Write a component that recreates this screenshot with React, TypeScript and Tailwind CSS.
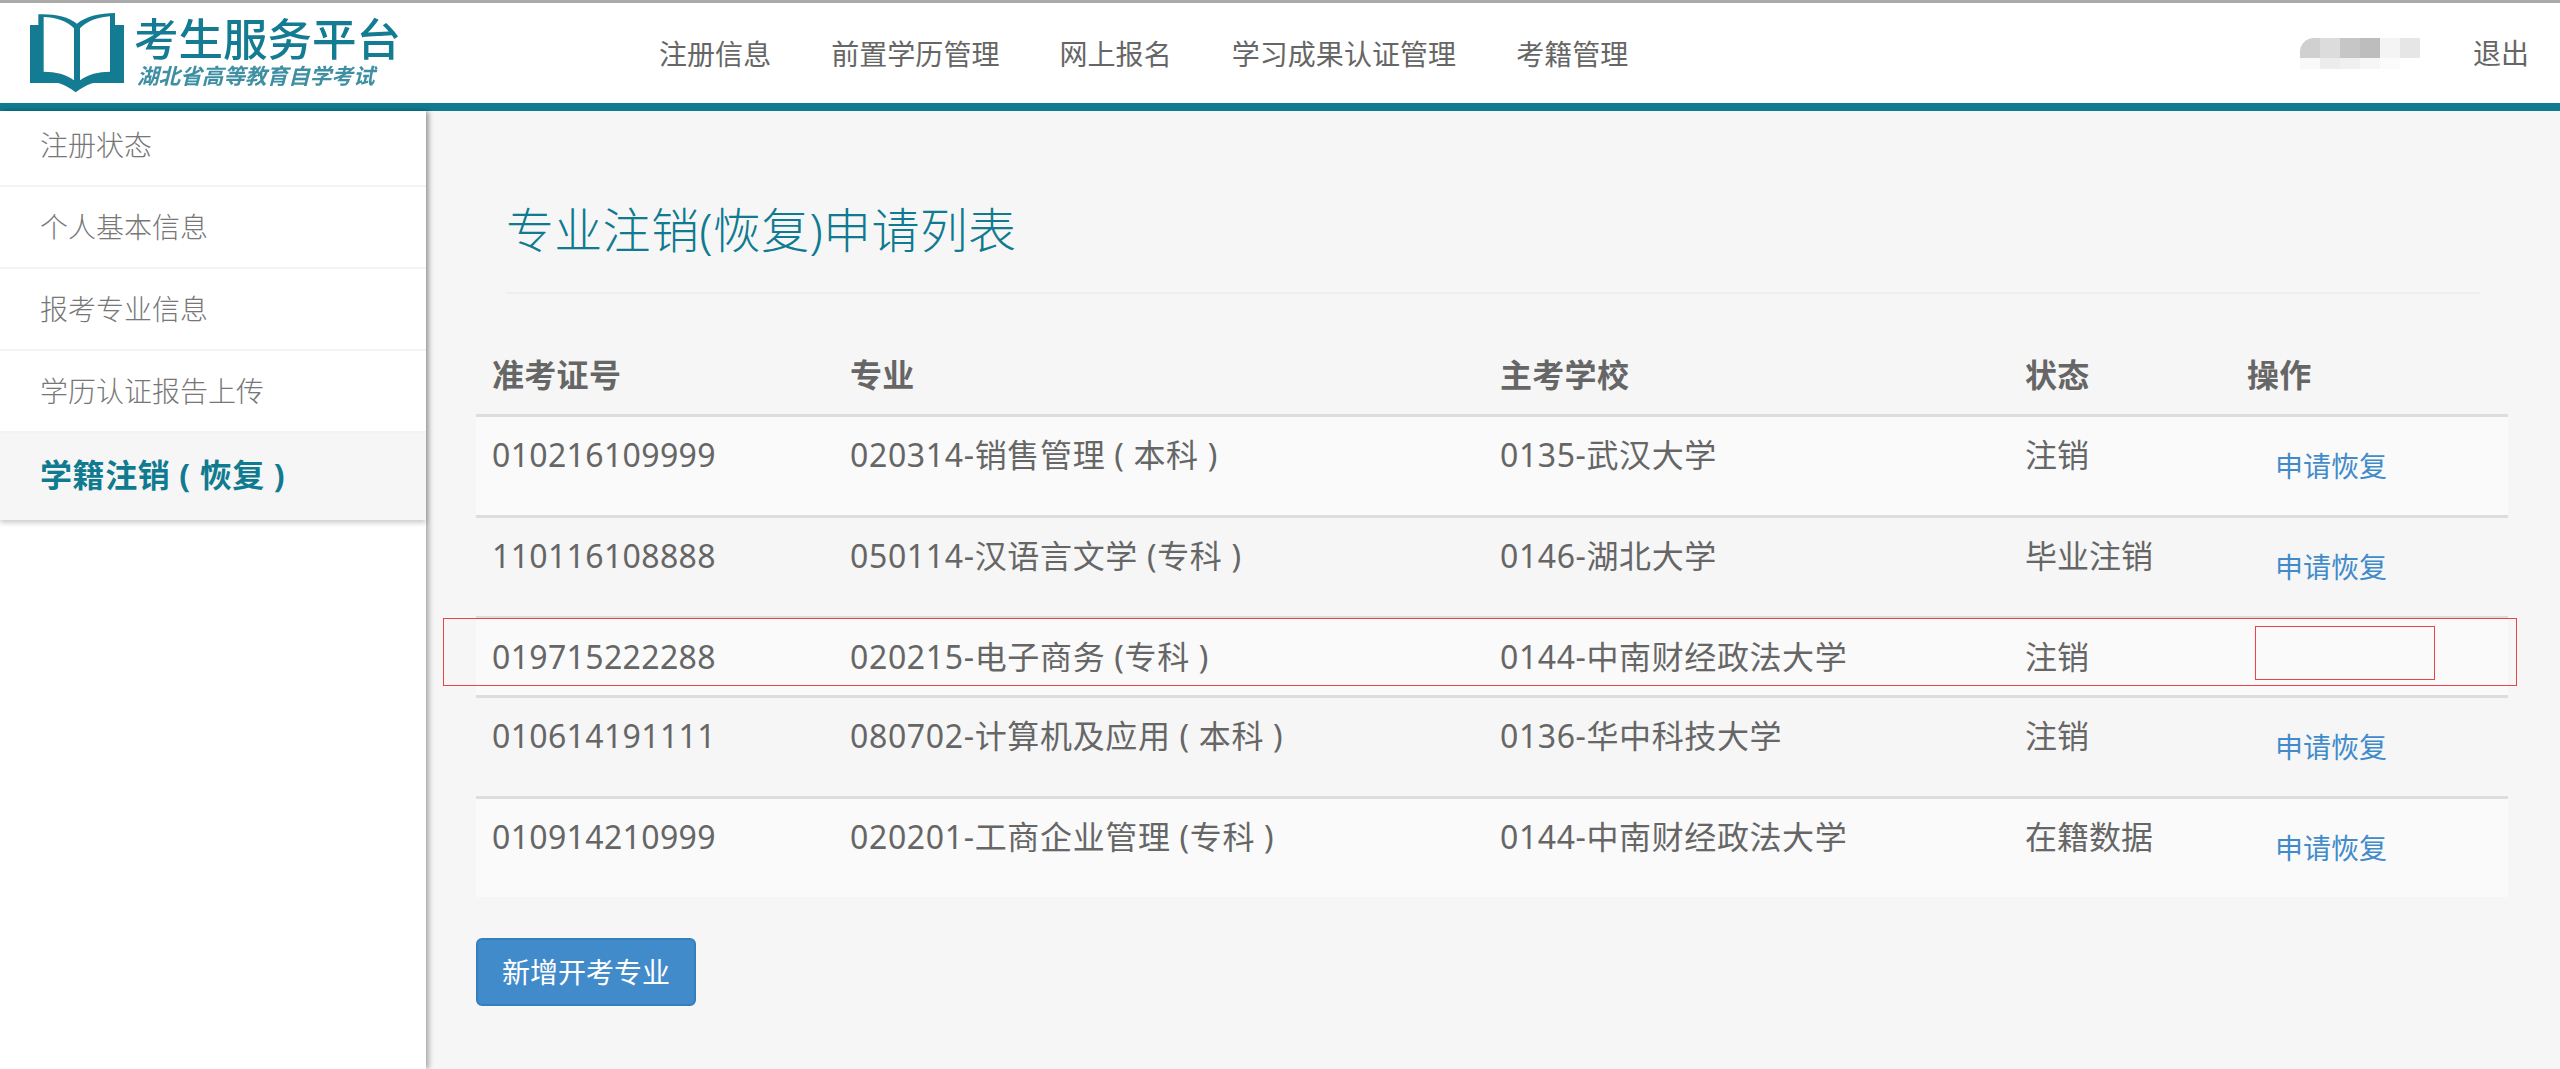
import React from 'react';

const navItems = ['注册信息', '前置学历管理', '网上报名', '学习成果认证管理', '考籍管理'];
const sideItems = ['注册状态', '个人基本信息', '报考专业信息', '学历认证报告上传'];

const rows = [
  { no: '010216109999', major: '020314-销售管理 ( 本科 )', school: '0135-武汉大学', status: '注销', link: true },
  { no: '110116108888', major: '050114-汉语言文学 (专科 )', school: '0146-湖北大学', status: '毕业注销', link: true },
  { no: '019715222288', major: '020215-电子商务 (专科 )', school: '0144-中南财经政法大学', status: '注销', link: false },
  { no: '010614191111', major: '080702-计算机及应用 ( 本科 )', school: '0136-华中科技大学', status: '注销', link: true },
  { no: '010914210999', major: '020201-工商企业管理 (专科 )', school: '0144-中南财经政法大学', status: '在籍数据', link: true },
];

// mosaic hiding the user name
const mosaicTop = ['#d0d0d0', '#dcdcdc', '#c6c6c6', '#bdbdbd', '#f4f4f4', '#e6e6e6'];
const mosaicBottom = ['#f9f9f9', '#ececec', '#f0f0f0', '#f6f6f6', '#fbfbfb', '#ffffff'];

function BookLogo() {
  return (
    <svg width="94" height="80" viewBox="0 0 282 240" className="shrink-0 blur-[0.4px]">
      <path
        d="M0 36H25V4C70 2 115 10 141 32C167 10 212 0 255 0V36H282V210H192C170 214 155 226 137 238C120 226 104 214 82 210H0Z"
        fill="#137b92"
      />
      <path d="M41 12C75 12 112 24 132 46V202C108 184 78 176 41 176Z" fill="#fff" />
      <path d="M150 46C170 24 205 12 240 10V176C205 176 175 184 150 202Z" fill="#fff" />
    </svg>
  );
}

export default function App() {
  return (
    <div className="min-h-[1069px] bg-[#f6f6f6] font-['Noto_Sans','Noto_Sans_CJK_SC',sans-serif] text-[#666]">
      <header className="h-[111px] border-t-[3px] border-b-[8px] border-t-[#aaaaaa] border-b-[#0f7a90] bg-white flex items-center">
        <div className="w-[659px] shrink-0 flex items-center pl-[30px] gap-[10px]">
          <BookLogo />
          <div className="flex flex-col -mt-1 blur-[0.4px]">
            <div className="text-[44.5px] leading-[50px] text-[#137b92] font-medium whitespace-nowrap">考生服务平台</div>
            <div className="text-[21.6px] leading-[24px] text-[#3f8fa3] font-bold italic ml-[3px] whitespace-nowrap">湖北省高等教育自学考试</div>
          </div>
        </div>
        <nav className="flex gap-[60px] text-[28px] leading-[40px] pt-[1px] tracking-[0.05px]">
          {navItems.map(item => (
            <div key={item} className="whitespace-nowrap">{item}</div>
          ))}
        </nav>
        <div className="ml-auto flex items-center pr-[31px]">
          <div className="mr-[53px] w-[120px] overflow-hidden rounded-tl-[14px] rounded-br-[14px]">
            <div className="flex">
              {mosaicTop.map((c, i) => (
                <div key={i} className="w-5 h-5" style={{ background: c }} />
              ))}
            </div>
            <div className="flex">
              {mosaicBottom.map((c, i) => (
                <div key={i} className="w-5 h-[11px]" style={{ background: c }} />
              ))}
            </div>
          </div>
          <div className="text-[28px] leading-[40px]">退出</div>
        </div>
      </header>

      <div className="flex min-h-[958px]">
        <aside className="w-[426px] shrink-0 bg-white shadow-[3px_0_5px_rgba(0,0,0,0.3)] z-10">
          <div className="shadow-[0_3px_5px_rgba(0,0,0,0.2)]">
            {sideItems.map((item, i) => (
              <div
                key={item}
                className={`${i === 0 ? 'h-[76px] pt-[14px]' : 'h-[82px] pt-[20px]'} border-b-2 border-[#f3f3f3] pl-[40px] text-[28px] leading-[40px] font-light text-[#777]`}
              >
                {item}
              </div>
            ))}
            <div className="h-[87px] bg-[#f6f6f6] pl-[40px] pt-[20px] text-[32px] leading-[44px] font-bold tracking-[0.6px] text-[#0f7a90] whitespace-nowrap">
              学籍注销 ( 恢复 )
            </div>
          </div>
        </aside>

        <main className="relative flex-1 pl-[50px] pr-[52px]">
          <div className="ml-[30px] mr-[28px] h-[183px] border-b-2 border-[#eeeeee] pt-[89px]">
            <h1 className="text-[48px] leading-[60px] font-light tracking-[0.3px] text-[#0f7a90] whitespace-nowrap">专业注销(恢复)申请列表</h1>
          </div>

          <table className="mt-[43px] w-full table-fixed border-collapse text-[32px] leading-[44px]">
            <colgroup>
              <col className="w-[358px]" />
              <col className="w-[650px]" />
              <col className="w-[525px]" />
              <col className="w-[222px]" />
              <col />
            </colgroup>
            <thead>
              <tr className="border-b-[3px] border-[#dddddd]">
                {['准考证号', '专业', '主考学校', '状态', '操作'].map(h => (
                  <th key={h} className="px-4 pt-4 pb-[17px] text-left font-bold tracking-[0.3px]">{h}</th>
                ))}
              </tr>
            </thead>
            <tbody>
              {rows.map((r, i) => (
                <tr key={r.no} className={`${i === 4 ? '' : 'border-b-[3px] border-[#dddddd]'} ${i % 2 === 0 ? 'bg-[#fafafa]' : ''}`}>
                  <td className="p-4 align-top whitespace-nowrap tracking-[0.35px]">{r.no}</td>
                  <td className="p-4 align-top whitespace-nowrap tracking-[0.65px]">{r.major}</td>
                  <td className="p-4 align-top whitespace-nowrap tracking-[0.6px]">{r.school}</td>
                  <td className="p-4 align-top whitespace-nowrap">{r.status}</td>
                  <td className="p-4 align-top whitespace-nowrap">
                    {r.link && (
                      <a className="block pl-[28px] py-[13px] text-[28px] leading-[40px] text-[#428bca]">申请恢复</a>
                    )}
                  </td>
                </tr>
              ))}
            </tbody>
          </table>

          <button className="mt-[41px] block h-[68px] w-[220px] rounded-[6px] border-2 border-[#357ebd] bg-[#428bca] text-[28px] leading-[40px] text-white">
            新增开考专业
          </button>

          {/* red annotation boxes drawn over the screenshot */}
          <div className="absolute left-[17px] top-[507px] h-[68px] w-[2074px] border border-[#f04048]" />
          <div className="absolute left-[1829px] top-[515px] h-[54px] w-[180px] border border-[#f04048]" />
        </main>
      </div>
    </div>
  );
}
